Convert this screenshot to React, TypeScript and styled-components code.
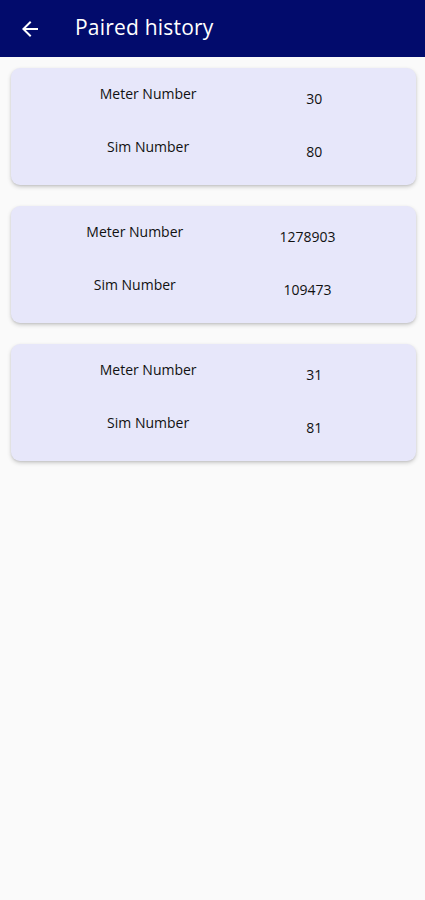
import React from 'react';
import styled, { createGlobalStyle } from 'styled-components';
import { MdArrowBack } from 'react-icons/md';

const GlobalStyle = createGlobalStyle`
  html, body {
    margin: 0;
    padding: 0;
    background: #fafafa;
  }
  body {
    font-family: 'Open Sans', 'Noto Sans', sans-serif;
    color: #111;
  }
`;

interface PairedRecord {
  meter: string;
  sim: string;
}

const records: PairedRecord[] = [
  { meter: '30', sim: '80' },
  { meter: '1278903', sim: '109473' },
  { meter: '31', sim: '81' },
];

const Screen = styled.div`
  width: 425px;
  min-height: 900px;
  background: #fafafa;
`;

const AppBar = styled.header`
  height: 57px;
  background: #020b6c;
  display: flex;
  align-items: center;
  padding-left: 18px;
  box-sizing: border-box;
`;

const BackButton = styled.button`
  width: 24px;
  height: 24px;
  padding: 0;
  border: none;
  background: transparent;
  color: #ffffff;
  display: flex;
  align-items: center;
  justify-content: center;
  margin-top: 1px;
`;

const Title = styled.h1`
  margin: 0 0 3px 33px;
  font-size: 21px;
  font-weight: 500;
  color: #ffffff;
  letter-spacing: 0.2px;
`;

const List = styled.main`
  display: flex;
  flex-direction: column;
  gap: 21px;
  padding: 11px 9px 0 11px;
`;

const Card = styled.section`
  background: #e7e7fa;
  border-radius: 9px;
  box-shadow: 0 2px 4px rgba(0, 0, 0, 0.18), 0 1px 2px rgba(0, 0, 0, 0.08);
  display: flex;
  justify-content: space-evenly;
  align-items: flex-start;
`;

const Column = styled.div<{ $value?: boolean }>`
  display: flex;
  flex-direction: column;
  align-items: center;
  gap: 33px;
  padding: ${({ $value }) => ($value ? '21px 5px 0 21px' : '16px 0 28px')};
`;

const Label = styled.span`
  font-size: 14px;
  line-height: 20px;
  color: #111;
`;

const Value = styled.span`
  font-size: 14px;
  line-height: 20px;
  color: #111;
`;

const RecordCard: React.FC<{ record: PairedRecord }> = ({ record }) => (
  <Card>
    <Column>
      <Label>Meter Number</Label>
      <Label>Sim Number</Label>
    </Column>
    <Column $value>
      <Value>{record.meter}</Value>
      <Value>{record.sim}</Value>
    </Column>
  </Card>
);

export default function App() {
  return (
    <Screen>
      <GlobalStyle />
      <AppBar>
        <BackButton aria-label="Back">
          <MdArrowBack size={24} />
        </BackButton>
        <Title>Paired history</Title>
      </AppBar>
      <List>
        {records.map((r, i) => (
          <RecordCard key={i} record={r} />
        ))}
      </List>
    </Screen>
  );
}
